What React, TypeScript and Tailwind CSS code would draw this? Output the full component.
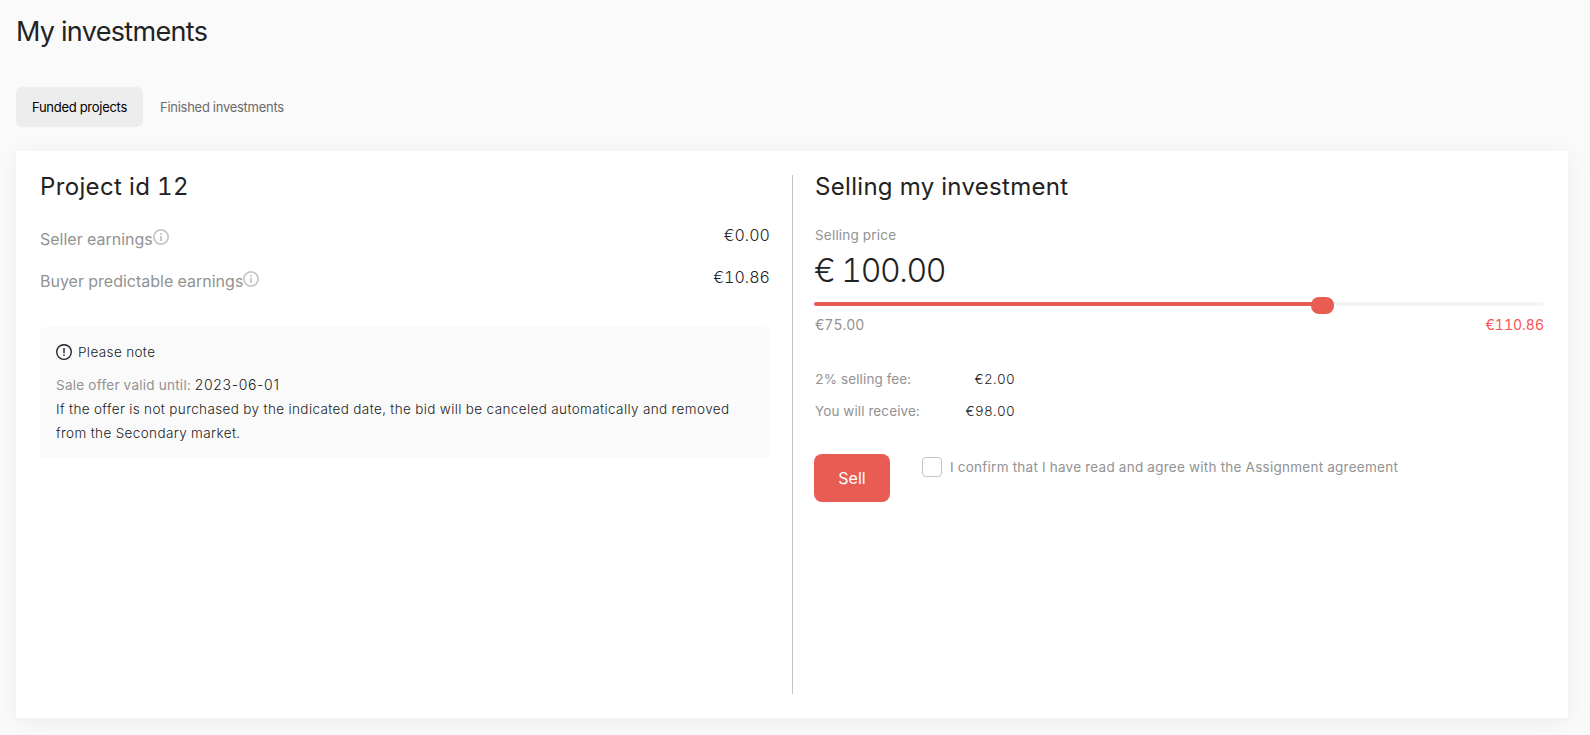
import React from "react";

const feeRows = [
  { label: "2% selling fee:", value: "€2.00" },
  { label: "You will receive:", value: "€98.00" },
];

function InfoIcon() {
  return (
    <svg width="16" height="16" viewBox="0 0 16 16" fill="none" className="mt-1 shrink-0">
      <circle cx="8" cy="8" r="7.1" stroke="#c8c8c8" strokeWidth="1.8" />
      <path d="M8 4v1.8M8 7v5" stroke="#c8c8c8" strokeWidth="2" />
    </svg>
  );
}

function NoteIcon() {
  return (
    <svg width="16" height="16" viewBox="0 0 16 16" fill="none" className="shrink-0">
      <circle cx="8" cy="8" r="7.3" stroke="#222222" strokeWidth="1.35" />
      <path d="M8 4v5.2M8 10.4v1.6" stroke="#222222" strokeWidth="1.4" />
    </svg>
  );
}

function EarningsRow(props: { label: string; value: string }) {
  return (
    <div className="flex h-[26px] justify-between text-base">
      <div className="flex">
        <span className="pt-[2px] leading-6 text-[#929292]">{props.label}</span>
        <InfoIcon />
      </div>
      <span className="font-light leading-5 tracking-[0.05px] text-[#222222]">{props.value}</span>
    </div>
  );
}

function App() {
  return (
    <div className="h-[735px] overflow-hidden bg-[#fafafa] pl-4 pr-[22px] pt-4 font-['Inter',sans-serif] text-[#222222] tabular-nums">
      <h1 className="text-[27px] leading-8 tracking-[-0.67px]">My investments</h1>
      <div className="mt-[39px] flex gap-[1px] text-[13px] tracking-[-0.27px]">
        <button className="h-10 w-[127px] rounded-md bg-[#ededed] pt-[2px] text-black">Funded projects</button>
        <button className="h-10 px-4 pt-[2px] text-[#6b6b6b]">Finished investments</button>
      </div>

      <div className="mt-6 flex h-[567px] bg-white p-6 shadow-[0_4px_24px_rgba(0,0,0,0.06)]">
        <div className="w-[730px]">
          <h2 className="text-2xl leading-6 tracking-[0.35px]">Project id 12</h2>
          <div className="mt-[26px] flex flex-col gap-4">
            <EarningsRow label="Seller earnings" value="€0.00" />
            <EarningsRow label="Buyer predictable earnings" value="€10.86" />
          </div>
          <div className="mt-[34px] h-[131px] rounded-md bg-[#fafafa] p-4 text-[13.5px] font-light tracking-[0.39px]">
            <div className="flex h-[18px] items-center gap-[6px]">
              <NoteIcon />
              <span className="pt-px">Please note</span>
            </div>
            <p className="mt-3 leading-6">
              <span className="font-normal tracking-[0.26px] text-[#929292]">Sale offer valid until:</span>{" "}
              <span className="text-sm leading-6 tracking-[0.65px] normal-nums">2023-06-01</span>
            </p>
            <p className="leading-6">
              If the offer is not purchased by the indicated date, the bid will be canceled
              automatically and removed from the Secondary market.
            </p>
          </div>
        </div>

        <div className="ml-[22px] w-px bg-[#c4c4c4]" />

        <div className="ml-[21px] w-[730px]">
          <h2 className="pl-px text-2xl leading-6 tracking-[0.31px]">Selling my investment</h2>
          <p className="mt-[26px] pl-px text-[13.5px] leading-5 tracking-[0.2px] text-[#929292]">Selling price</p>
          <p className="mt-[6px] text-[32px] font-light leading-10 tracking-[-1.4px]">€ 100.00</p>
          <div className="relative mt-[11px] h-1 rounded-full bg-[#f5f5f5]">
            <div className="h-1 w-[509px] rounded-full bg-[#e95c54]" />
            <div className="absolute -top-[5px] left-[497px] h-[17px] w-[23px] rounded-[8px] bg-[#e95c54]" />
          </div>
          <div className="mt-[9px] flex justify-between pl-px text-sm leading-5">
            <span className="text-[#929292]">€75.00</span>
            <span className="text-[#fa5252]">€110.86</span>
          </div>
          <div className="mt-[34px] flex w-[201px] flex-col gap-3 pl-px text-[13.5px] leading-5 tracking-[0.12px]">
            {feeRows.map((row) => (
              <div key={row.label} className="flex justify-between">
                <span className="text-[#929292]">{row.label}</span>
                <span className="font-light tracking-[0.3px]">{row.value}</span>
              </div>
            ))}
          </div>
          <div className="mt-[33px] flex items-start">
            <button className="h-12 w-[76px] rounded-lg bg-[#e95c54] text-base text-white">Sell</button>
            <label className="ml-8 mt-[3px] flex gap-2 text-[13.5px] leading-5 text-[#929292]">
              <span className="h-5 w-5 rounded-[4px] border border-[#c4c4c4] bg-white" />
              <span className="tracking-[0.26px]">
                I confirm that I have read and agree with the Assignment agreement
              </span>
            </label>
          </div>
        </div>
      </div>
    </div>
  );
}

export default App;
